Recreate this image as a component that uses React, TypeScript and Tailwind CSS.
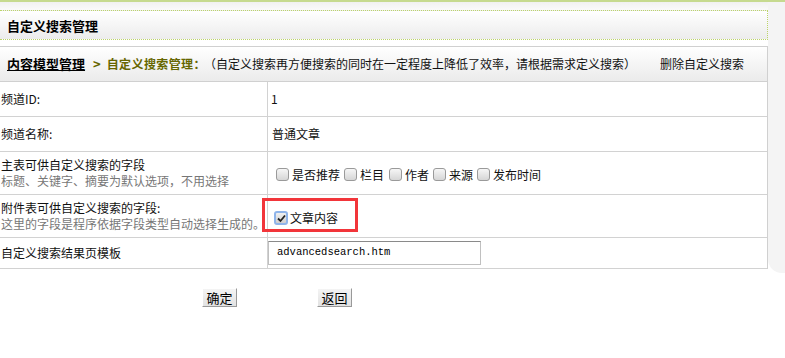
import React from 'react'

const font = { fontFamily: '"Noto Sans CJK SC", "Liberation Sans", sans-serif' }

function Box({ checked = false }: { checked?: boolean }) {
  if (checked) {
    return (
      <span className="inline-flex items-center justify-center w-[14px] h-[14px] rounded-[3px] border-2 border-[#8fb4ea] bg-gradient-to-b from-[#f0f0f0] to-[#cfcfcf]">
        <svg width="9" height="9" viewBox="0 0 9 9">
          <path d="M1 4.5 L3.5 7 L8 1.5" stroke="#222" strokeWidth="1.8" fill="none" />
        </svg>
      </span>
    )
  }
  return (
    <span className="inline-block w-[13px] h-[13px] rounded-[3px] border border-[#9a9a9a] bg-gradient-to-b from-[#f6f6f6] to-[#d6d6d6]" />
  )
}

function Row({
  h,
  left,
  children,
}: {
  h: string
  left: React.ReactNode
  children: React.ReactNode
}) {
  return (
    <div className={`grid grid-cols-[268px_1fr] border-b border-[#d2d2d2] ${h}`}>
      <div className="border-r border-[#d2d2d2] flex flex-col justify-center pl-[1px]">
        {left}
      </div>
      <div className="flex items-center pl-[3px]">{children}</div>
    </div>
  )
}

export default function App() {
  return (
    <main className="w-[785px] h-[358px] bg-white text-[12px] text-[#111] relative overflow-hidden" style={font}>
      <div className="h-[2px] bg-[#c6da8f]" />

      <div className="flex">
        <div className="w-[768px] bg-white">
          <div className="h-[8px] bg-gradient-to-b from-[#f1f1f1] to-[#fafafa]" />

          <div className="h-[30px] border-y border-r border-dotted border-[#bcd46a] bg-gradient-to-b from-white to-[#ececec] flex items-center pl-[7px] pt-[1px]">
            <span className="text-[13px] font-bold text-black">自定义搜索管理</span>
          </div>

          <div className="h-[6px]" />

          <div className="h-[36px] border-y border-r border-[#d0d0d0] bg-gradient-to-b from-white to-[#ebebeb] flex items-center pl-[7px]">
            <span className="text-[13px] font-bold underline text-black">内容模型管理</span>
            <span className="ml-[8px] font-bold text-[#666600] text-[13px]">&gt;</span>
            <span className="ml-[6px] font-bold text-[#666600] text-[12px] tracking-[0.4px]">自定义搜索管理：</span>
            <span className="-ml-[2px]">（自定义搜索再方便搜索的同时在一定程度上降低了效率，请根据需求定义搜索）</span>
            <span className="ml-[24px]">删除自定义搜索</span>
          </div>

          <div className="border-r border-[#d0d0d0]">
            <Row h="h-[35px]" left={<span>频道ID:</span>}>
              <span>1</span>
            </Row>
            <Row h="h-[35px]" left={<span>频道名称:</span>}>
              <span className="pl-[1px]">普通文章</span>
            </Row>
            <Row
              h="h-[43px]"
              left={
                <>
                  <span className="leading-[16px]">主表可供自定义搜索的字段</span>
                  <span className="leading-[16px] text-[#777]">标题、关键字、摘要为默认选项，不用选择</span>
                </>
              }
            >
              <div className="flex items-center pl-[5px] pt-[3px]">
                <Box />
                <span className="ml-[3px] mr-[4px]">是否推荐</span>
                <Box />
                <span className="ml-[3px] mr-[5px]">栏目</span>
                <Box />
                <span className="ml-[3px] mr-[4px]">作者</span>
                <Box />
                <span className="ml-[3px] mr-[4px]">来源</span>
                <Box />
                <span className="ml-[3px]">发布时间</span>
              </div>
            </Row>
            <Row
              h="h-[43px]"
              left={
                <>
                  <span className="leading-[16px]">附件表可供自定义搜索的字段:</span>
                  <span className="leading-[16px] text-[#777]">这里的字段是程序依据字段类型自动选择生成的。</span>
                </>
              }
            >
              <div className="flex items-center pl-[3px] pt-[4px]">
                <Box checked />
                <span className="ml-[2px]">文章内容</span>
              </div>
            </Row>
            <Row h="h-[31px]" left={<span>自定义搜索结果页模板</span>}>
              <div className="w-[213px] h-[24px] -ml-[3px] border border-[#c0c0c0] border-t-[#8a8a8a] flex items-center pl-[8px]">
                <span className="text-[10.5px] text-black" style={{ fontFamily: '"Liberation Mono", monospace' }}>
                  advancedsearch.htm
                </span>
              </div>
            </Row>
          </div>
        </div>

        <div className="flex-1 h-[271px] bg-[#f4f4f4] rounded-bl-[14px]" />
      </div>

      <div className="flex gap-[80px] pl-[202px] mt-[15px]">
        <button className="w-[35px] h-[19px] bg-gradient-to-b from-[#f4f4f4] to-[#e2e2e2] border border-white border-r-[#999] border-b-[#999] text-[13px] leading-none text-black">
          确定
        </button>
        <button className="w-[35px] h-[19px] bg-gradient-to-b from-[#f4f4f4] to-[#e2e2e2] border border-white border-r-[#999] border-b-[#999] text-[13px] leading-none text-black">
          返回
        </button>
      </div>

      <div className="absolute left-[262px] top-[198px] w-[96px] h-[34px] border-[3px] border-[#f2353a]" />
    </main>
  )
}
